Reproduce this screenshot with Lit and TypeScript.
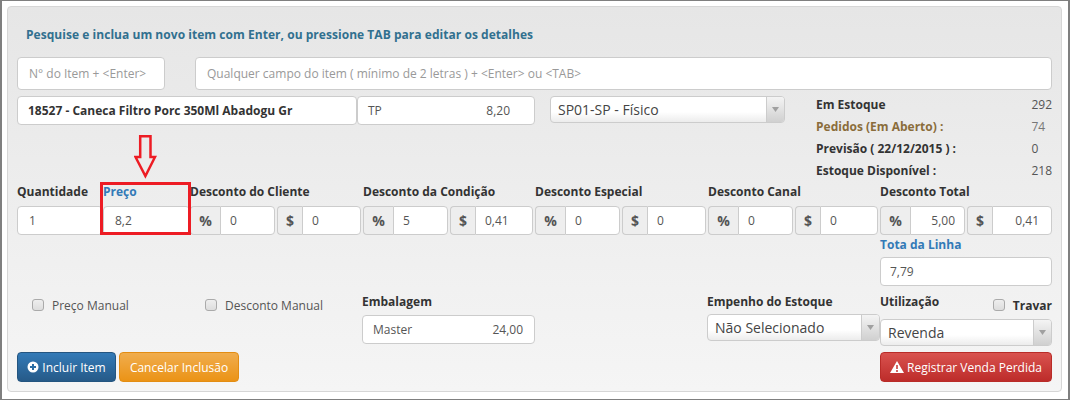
import { LitElement, html, css } from "lit";
import { customElement } from "lit/decorators.js";

const caret = html`<span class="caret"><svg width="7" height="5" viewBox="0 0 7 5"><path d="M0 0h7L3.5 5z" fill="#a0a0a0"/></svg></span>`;

@customElement("app-root")
export class AppRoot extends LitElement {
  static styles = css`
    :host { display: block; width: 1070px; height: 400px; box-sizing: border-box; position: relative;
      font-family: "Open Sans", sans-serif; font-size: 12px; color: #333; background: #fff;
      border: 1px solid #7f7f7f; border-left-width: 2px; border-right-width: 2px; padding: 5px 6px 7px 5px; overflow: hidden; }
    * { box-sizing: border-box; }
    .panel { height: 386px; border: 1px solid #d6d6d6; border-radius: 4px; padding: 19px 9px 9px 9px;
      background: linear-gradient(#e6e6e6, #f5f5f5); display: flex; flex-direction: column; }
    .panel > * { flex: none; }
    .title { font-weight: 700; font-size: 12px; line-height: 17px; letter-spacing: .04px; color: #31708f; margin-left: 9px; height: 31px; }
    input { font-family: inherit; font-size: 12px; color: #555; background: #fff; border: 1px solid #ccc; border-radius: 4px;
      padding: 0 11px; width: 100%; outline: none; min-width: 0; display: block; }
    input::placeholder { color: #999; opacity: 1; }
    .search { display: flex; gap: 30px; height: 33px; margin-bottom: 6px; }
    .search input:first-child { width: 148px; flex: none; }
    .search input { height: 33px; }
    .item { display: flex; align-items: flex-start; height: 87px; }
    .name { width: 340px; height: 29px; font-weight: 700; color: #333; padding: 0 10px; }
    .tp { width: 178px; height: 29px; border: 1px solid #ccc; border-radius: 4px; background: #fff; color: #555;
      display: flex; justify-content: space-between; align-items: center; padding: 0 24px 0 10px; }
    .select { height: 27px; border: 1px solid #ccc; border-radius: 4px; background: linear-gradient(#fff 60%, #ececec);
      font-size: 14px; color: #444; display: flex; align-items: center; justify-content: space-between; padding-left: 7px; }
    .caret { width: 18px; align-self: stretch; border-left: 1px solid #ccc; background: linear-gradient(#f4f4f4, #d0d0d0);
      display: flex; align-items: center; justify-content: center; border-radius: 0 3px 3px 0; }
    .item .select { width: 235px; margin-left: 15px; }
    .stats { width: 236px; margin: -3px 0 0 31px; display: grid; grid-template-columns: 1fr auto; grid-auto-rows: 22px; align-items: center; }
    .stats b { font-weight: 700; color: #333; }
    .stats span { color: #555; }
    .stats b.warn { color: #8a6d3b; }
    .stats span.muted { color: #777; }
    .prices { display: grid; grid-template-columns: 86px 87px 173px 172px 173px 172px 172px; }
    .lbl { font-weight: 700; font-size: 12px; line-height: 17px; color: #333; display: block; }
    .blue { color: #337ab7; }
    .prices .lbl { height: 23px; }
    .prices input { height: 29px; }
    .group { display: flex; height: 29px; }
    .group .add { width: 30px; flex: none; height: 29px; background: #eee; border: 1px solid #ccc; border-right: 0; border-radius: 4px 0 0 4px;
      display: flex; align-items: center; justify-content: center; font-weight: 700; font-size: 14px; color: #555; }
    .group .add.d { width: 25px; }
    .group input { border-radius: 0 4px 4px 0; padding: 0 9px; flex: 1; }
    .group input.r { text-align: right; }
    .val input.r { padding-right: 12px; }
    .pair { display: flex; gap: 2px; padding-right: 2px; }
    .pair:last-child { padding-right: 0; }
    .pair .pct { width: 85px; flex: none; }
    .pair .val { flex: 1; }
    .lower { display: grid; grid-template-columns: 863px 172px; flex: 1 1 0 !important; min-height: 0; }
    .left { display: flex; flex-direction: column; justify-content: space-between; padding-top: 58px; }
    .opts { display: grid; grid-template-columns: 345px 173px 172px 173px; }
    .checks { display: flex; padding: 6px 0 0 15px; color: #555; }
    .check { display: flex; align-items: flex-start; gap: 8px; line-height: 14px; font-size: 12px; }
    .check:first-child { width: 173px; }
    .box { width: 12px; height: 12px; flex: none; border: 1px solid #aaa; border-radius: 3px; background: linear-gradient(#eee, #ddd); }
    .opts .lbl { height: 21px; }
    .packing { width: 173px; height: 29px; margin-top: 1px; border: 1px solid #ccc; border-radius: 4px; background: #fff; color: #555;
      display: flex; justify-content: space-between; align-items: center; padding: 0 11px 0 10px; }
    .buttons { display: flex; gap: 3px; }
    .btn { height: 30px; border-radius: 4px; color: #fff; font-size: 12px; display: flex; align-items: center; justify-content: center; gap: 3px; flex: none; }
    .primary { width: 99px; background: linear-gradient(#337ab7, #265a88); border: 1px solid #245580; }
    .warning { width: 120px; background: linear-gradient(#f0ad4e, #eb9316); border: 1px solid #e38d13; }
    .danger { width: 172px; background: linear-gradient(#d9534f, #bd2c2a); border: 1px solid #b92c28; }
    .right { display: flex; flex-direction: column; }
    .right > .lbl { height: 22px; padding-top: 1px; }
    .right input { height: 29px; padding: 0 9px; }
    .usage { display: flex; justify-content: space-between; margin-top: 6px; height: 27px; }
    .usage .lbl { padding-top: 1px; }
    .usage .check { padding-top: 7px; font-weight: 700; color: #333; width: auto; }
    .right .select { margin-bottom: 6px; }
    .redbox { position: absolute; left: 98px; top: 181px; width: 91px; height: 53px; border: 3px solid #ed1c24; pointer-events: none; }
    .arrow { position: absolute; left: 132px; top: 134px; pointer-events: none; }
  `;

  private field(a: string, b: string, r = false) {
    return html`<div class="pair">
      <div class="group pct"><span class="add">%</span><input class=${r ? "r" : ""} .value=${a} /></div>
      <div class="group val"><span class="add d">$</span><input class=${r ? "r" : ""} .value=${b} /></div>
    </div>`;
  }

  render() {
    return html`<div class="panel">
      <div class="title">Pesquise e inclua um novo item com Enter, ou pressione TAB para editar os detalhes</div>
      <div class="search">
        <input placeholder="N° do Item + <Enter>" />
        <input placeholder="Qualquer campo do item ( mínimo de 2 letras ) + <Enter> ou <TAB>" />
      </div>
      <div class="item">
        <input class="name" .value=${"18527 - Caneca Filtro Porc 350Ml Abadogu Gr"} />
        <div class="tp"><span>TP</span><span>8,20</span></div>
        <div class="select"><span>SP01-SP - Físico</span>${caret}</div>
        <div class="stats">
          <b>Em Estoque</b><span>292</span>
          <b class="warn">Pedidos (Em Aberto) :</b><span class="muted">74</span>
          <b>Previsão ( 22/12/2015 ) :</b><span>0</span>
          <b>Estoque Disponível :</b><span>218</span>
        </div>
      </div>
      <div class="prices">
        <div class="lbl">Quantidade</div><div class="lbl blue">Preço</div>
        <div class="lbl">Desconto do Cliente</div><div class="lbl">Desconto da Condição</div>
        <div class="lbl">Desconto Especial</div><div class="lbl">Desconto Canal</div><div class="lbl">Desconto Total</div>
        <input .value=${"1"} /><input .value=${"8,2"} />
        ${this.field("0", "0")}${this.field("5", "0,41")}${this.field("0", "0")}${this.field("0", "0")}${this.field("5,00", "0,41", true)}
      </div>
      <div class="lower">
        <div class="left">
          <div class="opts">
            <div class="checks">
              <div class="check"><span class="box"></span>Preço Manual</div>
              <div class="check"><span class="box"></span>Desconto Manual</div>
            </div>
            <div><div class="lbl">Embalagem</div><div class="packing"><span>Master</span><span>24,00</span></div></div>
            <div></div>
            <div><div class="lbl">Empenho do Estoque</div><div class="select"><span>Não Selecionado</span>${caret}</div></div>
          </div>
          <div class="buttons">
            <div class="btn primary"><svg width="12" height="12" viewBox="0 0 12 12"><circle cx="6" cy="6" r="5.500" fill="#fff"/><path d="M3 6h6M6 3v6" stroke="#2c6da4" stroke-width="2"/></svg>Incluir Item</div>
            <div class="btn warning">Cancelar Inclusão</div>
          </div>
        </div>
        <div class="right">
          <div class="lbl blue">Tota da Linha</div>
          <input .value=${"7,79"} />
          <div class="usage"><div class="lbl">Utilização</div><div class="check"><span class="box"></span>Travar</div></div>
          <div class="select"><span>Revenda</span>${caret}</div>
          <div class="btn danger"><svg width="14" height="12" viewBox="0 0 14 12"><path d="M7 0l7 12H0z" fill="#fff"/><path d="M7 4v4M7 9v2" stroke="#c9403c" stroke-width="1.600"/></svg>Registrar Venda Perdida</div>
        </div>
      </div>
    </div>
    <div class="redbox"></div>
    <svg class="arrow" width="23" height="44" viewBox="0 0 23 44"><path d="M6.200 1.200H16.500V22H21L11.400 41 1.500 22H6.200Z" fill="none" stroke="#ed1c24" stroke-width="2.500"/></svg>`;
  }
}
